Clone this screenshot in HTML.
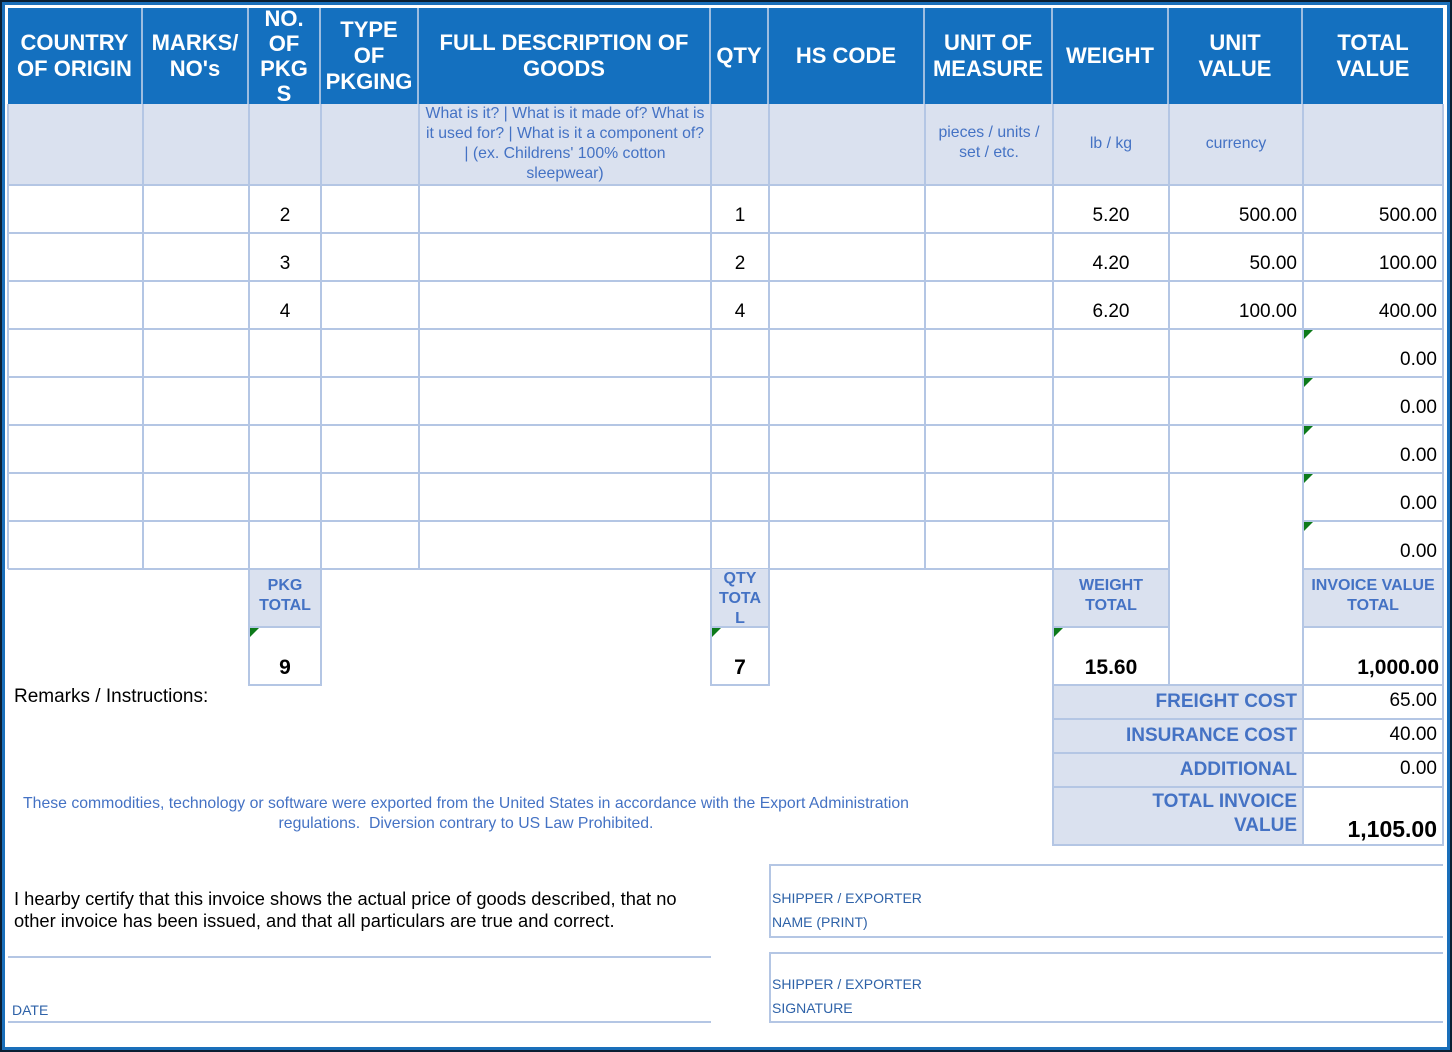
<!DOCTYPE html>
<html><head><meta charset="utf-8"><style>
*{margin:0;padding:0;box-sizing:border-box}
body{width:1452px;height:1052px;position:relative;overflow:hidden;background:#fff;font-family:"Liberation Sans",Arial,sans-serif}
.f1{position:absolute;left:0;top:0;width:1452px;height:1052px;border:2px solid #0a1f33}
.f2{position:absolute;left:2px;top:2px;width:1448px;height:1048px;border:3px solid #1a6fba}
.a{position:absolute}
.h{position:absolute;background:#1470bf;color:#fff;font-weight:bold;font-size:22px;line-height:26px;text-align:center;display:flex;align-items:center;justify-content:center;border-right:2px solid #9dbde0}
.l{background:#dae1ef}
.v{position:absolute;width:2px;background:#b4c6e4}
.hz{position:absolute;height:2px;background:#b4c6e4}
.n{position:absolute;font-size:19px;color:#000;text-align:center}
.r{text-align:right}
.b{font-weight:bold;font-size:21px}
.bl{color:#4472c4;font-weight:bold;font-size:16px;line-height:20px;text-align:center}
.s{color:#4472c4;font-size:15.8px;line-height:20px;text-align:center}
.g{position:absolute;width:0;height:0;border-top:9px solid #0d7a1a;border-right:9px solid transparent}
.lab{position:absolute;color:#4472c4;font-weight:bold;font-size:19px;text-align:right;background:#dae1ef}
</style></head><body>
<div class="f1"></div><div class="f2"></div>
<div class="h" style="left:8px;top:8px;width:135px;height:96px">COUNTRY<br>OF ORIGIN</div>
<div class="h" style="left:143px;top:8px;width:106px;height:96px">MARKS/<br>NO's</div>
<div class="h" style="left:249px;top:8px;width:72px;height:96px;line-height:25px">NO.<br>OF<br>PKG<br>S</div>
<div class="h" style="left:321px;top:8px;width:98px;height:96px">TYPE<br>OF<br>PKGING</div>
<div class="h" style="left:419px;top:8px;width:292px;height:96px">FULL DESCRIPTION OF<br>GOODS</div>
<div class="h" style="left:711px;top:8px;width:58px;height:96px">QTY</div>
<div class="h" style="left:769px;top:8px;width:156px;height:96px">HS CODE</div>
<div class="h" style="left:925px;top:8px;width:128px;height:96px">UNIT OF<br>MEASURE</div>
<div class="h" style="left:1053px;top:8px;width:116px;height:96px">WEIGHT</div>
<div class="h" style="left:1169px;top:8px;width:134px;height:96px">UNIT<br>VALUE</div>
<div class="h" style="left:1303px;top:8px;width:140px;height:96px;border-right:none">TOTAL<br>VALUE</div>
<div class="a l" style="left:8px;top:104px;width:1435px;height:81px"></div>
<div class="a s" style="left:419px;top:104px;width:292px">What is it? | What is it made of? What is<br>it used for? | What is it a component of?<br>| (ex. Childrens' 100% cotton<br>sleepwear)</div>
<div class="a s" style="left:925px;top:123px;width:128px">pieces / units /<br>set / etc.</div>
<div class="a s" style="left:1053px;top:134px;width:116px">lb / kg</div>
<div class="a s" style="left:1169px;top:134px;width:134px">currency</div>
<div class="v" style="left:7px;top:104px;height:465px"></div>
<div class="v" style="left:142px;top:104px;height:465px"></div>
<div class="v" style="left:248px;top:104px;height:582px"></div>
<div class="v" style="left:320px;top:104px;height:582px"></div>
<div class="v" style="left:418px;top:104px;height:465px"></div>
<div class="v" style="left:710px;top:104px;height:582px"></div>
<div class="v" style="left:768px;top:104px;height:582px"></div>
<div class="v" style="left:924px;top:104px;height:465px"></div>
<div class="v" style="left:1052px;top:104px;height:742px"></div>
<div class="v" style="left:1168px;top:104px;height:582px"></div>
<div class="v" style="left:1302px;top:104px;height:742px"></div>
<div class="v" style="left:1442px;top:104px;height:742px"></div>
<div class="hz" style="left:8px;top:184px;width:1435px"></div>
<div class="hz" style="left:8px;top:232px;width:1435px"></div>
<div class="hz" style="left:8px;top:280px;width:1435px"></div>
<div class="hz" style="left:8px;top:328px;width:1435px"></div>
<div class="hz" style="left:8px;top:376px;width:1435px"></div>
<div class="hz" style="left:8px;top:424px;width:1435px"></div>
<div class="hz" style="left:8px;top:472px;width:1435px"></div>
<div class="hz" style="left:8px;top:520px;width:1161px"></div>
<div class="hz" style="left:1303px;top:520px;width:140px"></div>
<div class="hz" style="left:8px;top:568px;width:1161px"></div>
<div class="hz" style="left:1303px;top:568px;width:140px"></div>
<div class="n" style="left:249px;top:205px;width:72px">2</div>
<div class="n" style="left:249px;top:253px;width:72px">3</div>
<div class="n" style="left:249px;top:301px;width:72px">4</div>
<div class="n" style="left:711px;top:205px;width:58px">1</div>
<div class="n" style="left:711px;top:253px;width:58px">2</div>
<div class="n" style="left:711px;top:301px;width:58px">4</div>
<div class="n" style="left:1053px;top:205px;width:116px">5.20</div>
<div class="n" style="left:1053px;top:253px;width:116px">4.20</div>
<div class="n" style="left:1053px;top:301px;width:116px">6.20</div>
<div class="n r" style="left:1169px;top:205px;width:128px">500.00</div>
<div class="n r" style="left:1169px;top:253px;width:128px">50.00</div>
<div class="n r" style="left:1169px;top:301px;width:128px">100.00</div>
<div class="n r" style="left:1303px;top:205px;width:134px">500.00</div>
<div class="n r" style="left:1303px;top:253px;width:134px">100.00</div>
<div class="n r" style="left:1303px;top:301px;width:134px">400.00</div>
<div class="n r" style="left:1303px;top:349px;width:134px">0.00</div>
<div class="n r" style="left:1303px;top:397px;width:134px">0.00</div>
<div class="n r" style="left:1303px;top:445px;width:134px">0.00</div>
<div class="n r" style="left:1303px;top:493px;width:134px">0.00</div>
<div class="n r" style="left:1303px;top:541px;width:134px">0.00</div>
<div class="g" style="left:1304px;top:330px"></div>
<div class="g" style="left:1304px;top:378px"></div>
<div class="g" style="left:1304px;top:426px"></div>
<div class="g" style="left:1304px;top:474px"></div>
<div class="g" style="left:1304px;top:522px"></div>
<div class="a l bl" style="left:250px;top:570px;width:70px;height:56px;padding-top:6px">PKG<br>TOTAL</div>
<div class="a l bl" style="left:712px;top:569px;width:56px;height:57px;line-height:20px">QTY<br>TOTA<br>L</div>
<div class="a l bl" style="left:1054px;top:570px;width:114px;height:56px;padding-top:6px">WEIGHT<br>TOTAL</div>
<div class="a l bl" style="left:1304px;top:570px;width:138px;height:56px;padding-top:6px">INVOICE VALUE<br>TOTAL</div>
<div class="hz" style="left:249px;top:626px;width:72px"></div>
<div class="hz" style="left:711px;top:626px;width:58px"></div>
<div class="hz" style="left:1053px;top:626px;width:116px"></div>
<div class="hz" style="left:1303px;top:626px;width:140px"></div>
<div class="hz" style="left:249px;top:684px;width:72px"></div>
<div class="hz" style="left:711px;top:684px;width:58px"></div>
<div class="g" style="left:250px;top:628px"></div>
<div class="g" style="left:712px;top:628px"></div>
<div class="g" style="left:1054px;top:628px"></div>
<div class="n b" style="left:249px;top:656px;width:72px">9</div>
<div class="n b" style="left:711px;top:656px;width:58px">7</div>
<div class="n b" style="left:1053px;top:656px;width:116px">15.60</div>
<div class="n b r" style="left:1303px;top:656px;width:136px">1,000.00</div>
<div class="lab" style="left:1054px;top:686px;width:248px;height:32px;padding:5px 5px 0 0">FREIGHT COST</div>
<div class="lab" style="left:1054px;top:720px;width:248px;height:32px;padding:5px 5px 0 0">INSURANCE COST</div>
<div class="lab" style="left:1054px;top:754px;width:248px;height:32px;padding:5px 5px 0 0">ADDITIONAL</div>
<div class="lab" style="left:1054px;top:788px;width:248px;height:56px;padding:2px 5px 0 0;line-height:24px">TOTAL INVOICE<br>VALUE</div>
<div class="hz" style="left:1053px;top:684px;width:390px"></div>
<div class="hz" style="left:1053px;top:718px;width:390px"></div>
<div class="hz" style="left:1053px;top:752px;width:390px"></div>
<div class="hz" style="left:1053px;top:786px;width:390px"></div>
<div class="hz" style="left:1053px;top:844px;width:390px"></div>
<div class="n r" style="left:1303px;top:690px;width:134px">65.00</div>
<div class="n r" style="left:1303px;top:724px;width:134px">40.00</div>
<div class="n r" style="left:1303px;top:758px;width:134px">0.00</div>
<div class="n r b" style="left:1303px;top:816px;width:134px;font-size:23px">1,105.00</div>
<div class="a" style="left:14px;top:686px;font-size:19px">Remarks / Instructions:</div>
<div class="a s" style="left:0px;top:794px;width:932px;white-space:nowrap">These commodities, technology or software were exported from the United States in accordance with the Export Administration<br>regulations.&nbsp; Diversion contrary to US Law Prohibited.</div>
<div class="a" style="left:14px;top:888px;font-size:18.3px;line-height:22px">I hearby certify that this invoice shows the actual price of goods described, that no<br>other invoice has been issued, and that all particulars are true and correct.</div>
<div class="hz" style="left:8px;top:956px;width:703px"></div>
<div class="hz" style="left:8px;top:1021px;width:703px"></div>
<div class="a" style="left:12px;top:1002px;font-size:14px;color:#2e62a8">DATE</div>
<div class="a" style="left:769px;top:864px;width:674px;height:74px;border:2px solid #b4c6e4;border-right:none"></div>
<div class="a" style="left:769px;top:952px;width:674px;height:71px;border:2px solid #b4c6e4;border-right:none"></div>
<div class="a" style="left:772px;top:886px;font-size:14px;line-height:24px;color:#2e62a8">SHIPPER / EXPORTER<br>NAME (PRINT)</div>
<div class="a" style="left:772px;top:972px;font-size:14px;line-height:24px;color:#2e62a8">SHIPPER / EXPORTER<br>SIGNATURE</div>
</body></html>
